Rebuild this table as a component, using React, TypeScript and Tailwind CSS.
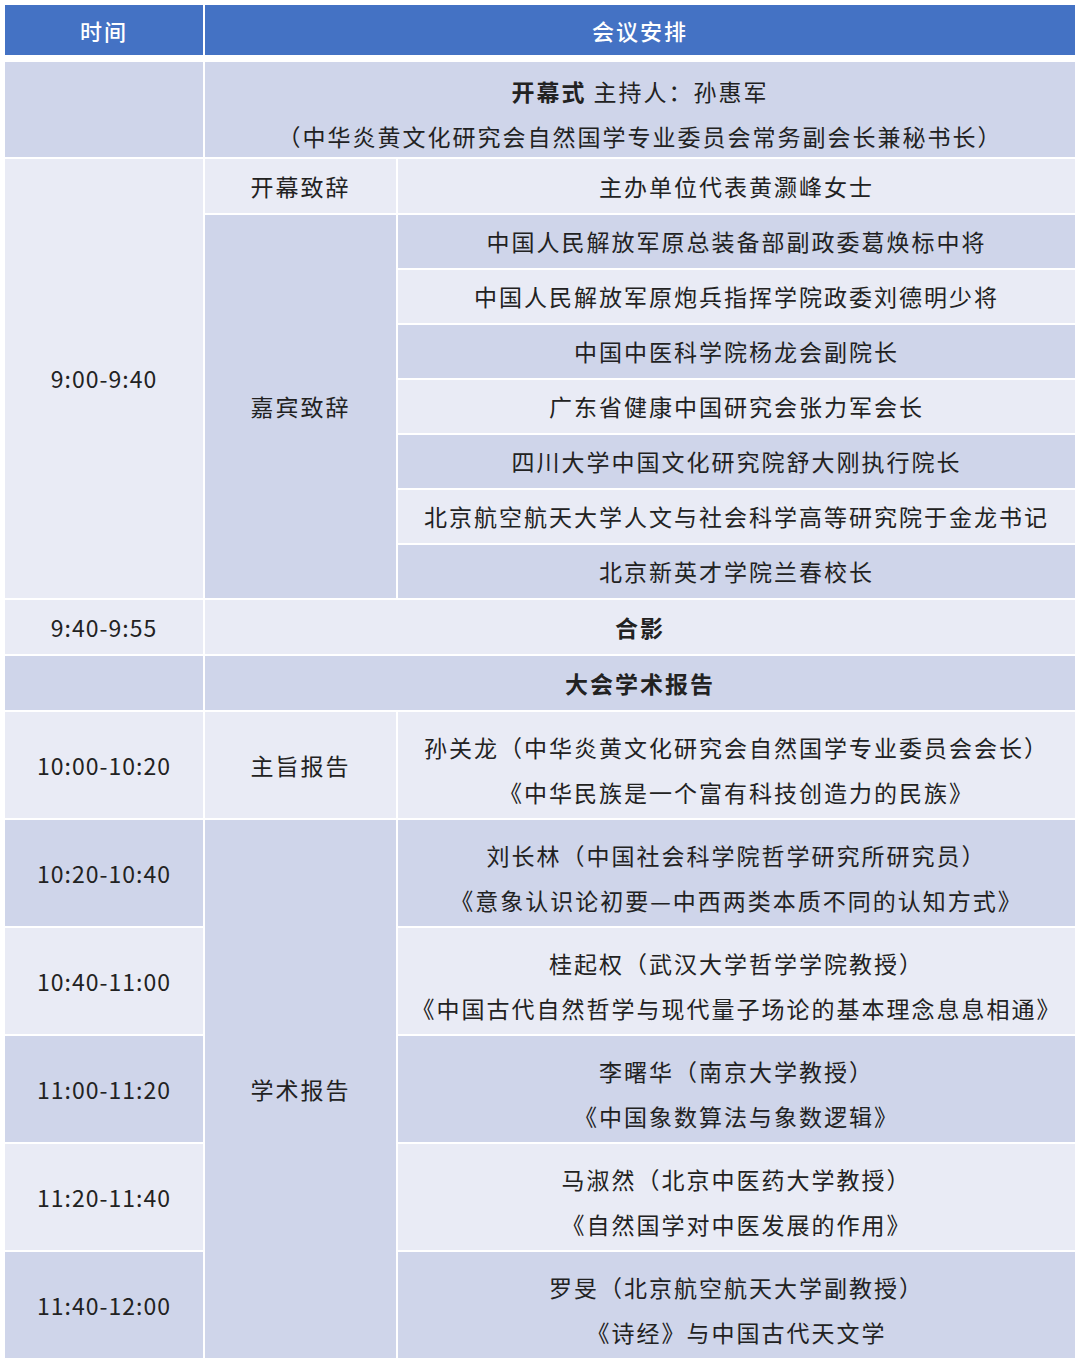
const dark = "bg-[#cfd5ea]";
const light = "bg-[#e9ebf5]";

function Cell({ tone, className = "", children }: any) {
    return (
        <div className={`${tone} flex flex-col items-center justify-center text-center ${className}`}>
            {children}
        </div>
    );
}

function Two({ a, b }: any) {
    return (
        <div className="leading-[45px] whitespace-nowrap pt-[9px]">
            <div>{a}</div>
            <div>{b}</div>
        </div>
    );
}

function Time({ tone, children }: any) {
    return (
        <Cell tone={tone} className="tracking-[1px]">
            {children}
        </Cell>
    );
}

const guests = [
    "中国人民解放军原总装备部副政委葛焕标中将",
    "中国人民解放军原炮兵指挥学院政委刘德明少将",
    "中国中医科学院杨龙会副院长",
    "广东省健康中国研究会张力军会长",
    "四川大学中国文化研究院舒大刚执行院长",
    "北京航空航天大学人文与社会科学高等研究院于金龙书记",
    "北京新英才学院兰春校长",
];

const talks = [
    ["10:20-10:40", "刘长林（中国社会科学院哲学研究所研究员）", "《意象认识论初要—中西两类本质不同的认知方式》"],
    ["10:40-11:00", "桂起权（武汉大学哲学学院教授）", "《中国古代自然哲学与现代量子场论的基本理念息息相通》"],
    ["11:00-11:20", "李曙华（南京大学教授）", "《中国象数算法与象数逻辑》"],
    ["11:20-11:40", "马淑然（北京中医药大学教授）", "《自然国学对中医发展的作用》"],
    ["11:40-12:00", "罗旻（北京航空航天大学副教授）", "《诗经》与中国古代天文学"],
];

export default function App() {
    return (
        <main className="w-[1080px] h-[1363px] bg-white p-[5px] font-['Noto_Sans_CJK_SC',sans-serif] text-[23px] tracking-[2px] text-[#222]">
            <div className="grid grid-cols-[198px_191px_677px] gap-x-[2px] h-[50px] text-white font-medium text-[22px]">
                <div className="bg-[#4472c4] flex items-center justify-center">时间</div>
                <div className="bg-[#4472c4] col-span-2 flex items-center justify-center">会议安排</div>
            </div>

            <div className="mt-[7px] grid grid-cols-[198px_191px_677px] grid-rows-[95px_54px_repeat(7,53px)_54px_54px_repeat(6,106px)] gap-[2px]">
                <Cell tone={dark} />
                <Cell tone={dark} className="col-span-2">
                    <Two
                        a={<><b className="font-bold">开幕式</b> 主持人：孙惠军</>}
                        b="（中华炎黄文化研究会自然国学专业委员会常务副会长兼秘书长）"
                    />
                </Cell>

                <Cell tone={light} className="row-span-8 tracking-[1px]">9:00-9:40</Cell>
                <Cell tone={light}>开幕致辞</Cell>
                <Cell tone={light}>主办单位代表黄灏峰女士</Cell>

                <Cell tone={dark} className="row-span-7">嘉宾致辞</Cell>
                {guests.map((g, i) => (
                    <Cell key={g} tone={i % 2 === 0 ? dark : light} className="whitespace-nowrap">
                        {g}
                    </Cell>
                ))}

                <Time tone={light}>9:40-9:55</Time>
                <Cell tone={light} className="col-span-2 font-bold">合影</Cell>

                <Cell tone={dark} />
                <Cell tone={dark} className="col-span-2 font-bold">大会学术报告</Cell>

                <Time tone={light}>10:00-10:20</Time>
                <Cell tone={light}>主旨报告</Cell>
                <Cell tone={light}>
                    <Two a="孙关龙（中华炎黄文化研究会自然国学专业委员会会长）" b="《中华民族是一个富有科技创造力的民族》" />
                </Cell>

                {talks.map(([t, a, b], i) => {
                    const tone = i % 2 === 0 ? dark : light;
                    return [
                        <Time key={t} tone={tone}>{t}</Time>,
                        i === 0 ? <Cell key="xs" tone={dark} className="row-span-5">学术报告</Cell> : null,
                        <Cell key={t + "c"} tone={tone}>
                            <Two a={a} b={b} />
                        </Cell>,
                    ];
                })}
            </div>
        </main>
    );
}
